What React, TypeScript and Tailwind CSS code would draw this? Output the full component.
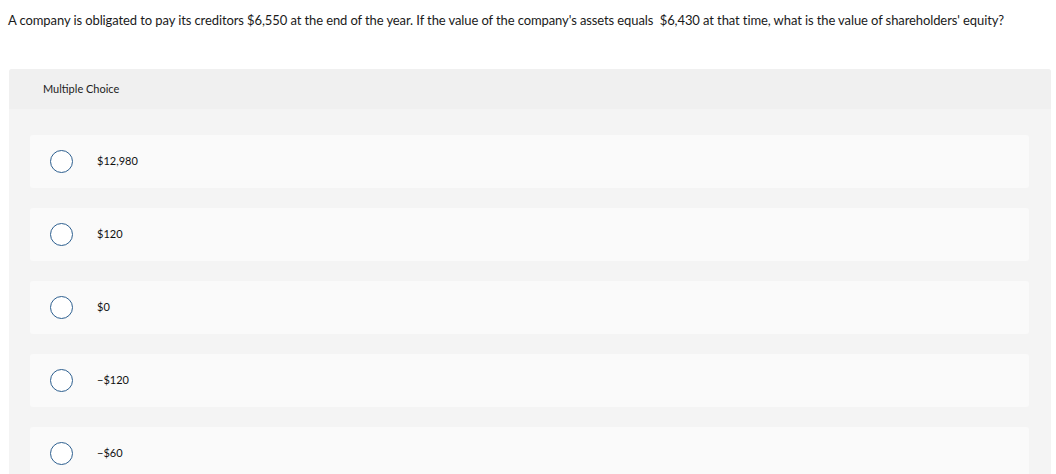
import React from "react";

const options = ["$12,980", "$120", "$0", "−$120", "−$60"];

export default function App() {
  return (
    <div className="w-[1056px] h-[474px] overflow-hidden bg-white font-['Lato',sans-serif] text-[#1a1a1a]">
      <p className="pl-[8px] pt-[12px] text-[13px] leading-[16px] tracking-[-0.1px]">
        A company is obligated to pay its creditors $6,550 at the end of the year. If the value of the company's assets equals&nbsp; $6,430 at that time, what is the value of shareholders' equity?
      </p>
      <div className="mt-[41px] ml-[9px] w-[1042px] rounded-t-[3px] bg-[#f4f4f4]">
        <div className="h-[40px] flex items-center pl-[34px] bg-[#f0f0f0] rounded-t-[3px] text-[11px] text-[#222]">
          Multiple Choice
        </div>
        <div className="pt-[26px] pl-[21px] pr-[22px] flex flex-col gap-[20px]">
          {options.map((o) => (
            <div key={o} className="h-[53px] rounded-[3px] bg-[#fafafa] flex items-center">
              <div className="ml-[20px] w-[23px] h-[23px] rounded-full border-[1.5px] border-[#2d5f8f] bg-white" />
              <span className="ml-[24px] text-[11px] text-[#111]">{o}</span>
            </div>
          ))}
        </div>
      </div>
    </div>
  );
}
